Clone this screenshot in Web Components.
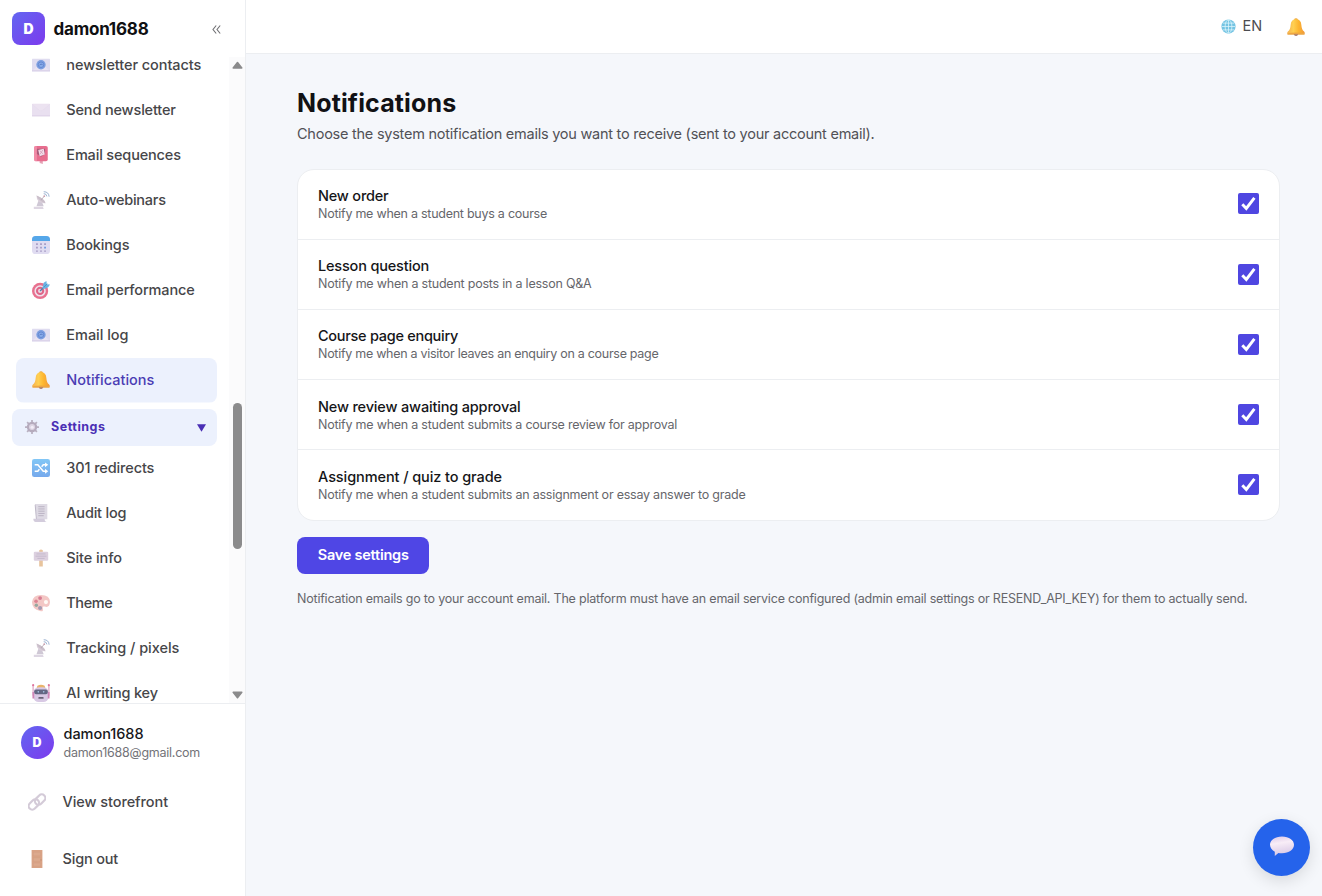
<!DOCTYPE html>
<html lang="en">
<head>
<meta charset="utf-8">
<title>Notifications</title>
<style>
html, body { margin: 0; height: 100%; overflow: hidden; font-family: Inter, "Liberation Sans", sans-serif; }
</style>
</head>
<body>
<app-shell></app-shell>
<script>
const define = (name, render, after) => customElements.define(name, class extends HTMLElement {
  connectedCallback() {
    if (this.shadowRoot) return;
    this.attachShadow({ mode: 'open' }).innerHTML = render(this);
    if (after) after(this);
  }
});

/* Single line of text, tracked to occupy the width given in "w". */
define('fit-text', () => `<style>:host{display:inline-block;white-space:nowrap;flex:none}</style><slot></slot>`, el => {
  const w = parseFloat(el.getAttribute('w'));
  const n = el.textContent.length;
  if (w && n) el.style.letterSpacing = ((w - el.getBoundingClientRect().width) / n).toFixed(4) + 'px';
});

const ICONS = {
  mailat: `<rect x="0" y="3" width="20" height="14" rx=".6" fill="#dfdcf0"/><path d="M0 17l7-7h6l7 7z" fill="#e9e3f2"/><path d="M0 16.500h20" stroke="#d3cbe4"/><circle cx="10" cy="9.700" r="5.200" fill="#7d9fe0"/><circle cx="10" cy="9.700" r="3.100" fill="#86abea" stroke="#5f82cd" stroke-width=".9"/><path d="M8.300 10.100q1.700-2 3.400-.5" stroke="#5877c2" fill="none"/>`,
  mail: `<rect x="0" y="3" width="20" height="14" rx=".6" fill="#e9e0f0"/><path d="M0 3.500l8.500 7q1.500 1 3 0L20 3.500" fill="#ece3f1" stroke="#e4d9eb" stroke-width=".5"/><path d="M0 16.500h20" stroke="#ddd0e6"/>`,
  postbox: `<path d="M8.500 16h3.500v4l-3.500-1z" fill="#e5a2b5"/><rect x="2.500" y="0" width="15" height="17" rx="2" fill="#e76d8e"/><rect x="2.500" y="0" width="3" height="17" rx="1.500" fill="#f08ba6"/><path d="M5.500 3h9v6l-4.500 3-4.500-3z" fill="#a85b79"/><path d="M7 4.500l6-1.500 1.200 6.500-5.700 1.800z" fill="#f2dce9"/><path d="M8.500 5l4 4M12 4.500L9 9" stroke="#cf90ab" stroke-width=".7"/>`,
  dish: `<path d="M7 11l-2 6h8l-2-5z" fill="#cfc8d5"/><path d="M2 17.500h10l1 2.500H2z" fill="#ddd6e2"/><path d="M5 5q0 9 10 8.500Q14 9 5 5z" fill="#d9ced9"/><path d="M5 5q2 6 10 8.500-1-5-10-8.500" fill="#c9bec9"/><path d="M10 10l3.500-4" stroke="#b8a8b6"/><circle cx="13.600" cy="5.800" r="1" fill="#c89fae"/><path d="M13 3q3-.3 3.500 3M13 .8q5.600 0 6 5.500" fill="none" stroke="#91aacd" stroke-width="1"/>`,
  calendar: `<rect x="0" y="0" width="20" height="20" rx="4" fill="#e0dcf1"/><path d="M0 5.500V4q0-4 4-4h12q4 0 4 4v1.500z" fill="#55a7e9"/><g fill="#a79cc5"><path d="M4.500 8h2v2h-2zM9 8h2v2H9zM13.500 8h2v2h-2zM4.500 12h2v2h-2zM9 12h2v2H9zM4.500 16h2v1.500h-2zM9 16h2v1.500H9zM13.500 16h2v1.500h-2z"/></g><path d="M13.500 12h2v2h-2z" fill="#6b9ae0"/>`,
  target: `<circle cx="9" cy="11" r="9" fill="#e8718f"/><circle cx="9" cy="11" r="6.300" fill="#efe2ed"/><circle cx="9" cy="11" r="4.600" fill="#df6587"/><circle cx="9" cy="11" r="2.300" fill="#ecd6e4"/><path d="M9 11l6-6" stroke="#577fa9" stroke-width="1.500"/><path d="M12 6l1-4 3-2 .5 3.500L20 4l-2 3-4 1.500-2 .5z" fill="#69b3e3"/><path d="M13 7l4-4" stroke="#4787b9" stroke-width=".8"/>`,
  bell: `<defs><linearGradient id="b"><stop stop-color="#f5b151"/><stop offset=".35" stop-color="#ffd052"/><stop offset=".65" stop-color="#fdb52f"/><stop offset="1" stop-color="#ef973e"/></linearGradient></defs><ellipse cx="10" cy="1.800" rx="1.900" ry="1.600" fill="#eea942"/><path d="M10 1.500q5.600 0 6 6.500.2 5 3 7 1 1 .7 2.500H.3Q0 16 1 15q2.800-2 3-7 .4-6.500 6-6.500z" fill="url(#b)"/><path d="M.5 17q9.500-2 19 0v1.500h-19z" fill="#eda643"/><path d="M7.500 18h5q-.5 2-2.500 2t-2.500-2z" fill="#a67864"/>`,
  gear: `<g stroke="#b9b1c1" stroke-width="2.500"><path d="M10 0v20M0 10h20M3 3l14 14M17 3L3 17"/></g><circle cx="10" cy="10" r="7.400" fill="#b5abbd"/><circle cx="10" cy="10" r="4.300" fill="#ddd5e3"/><circle cx="10.300" cy="10.300" r="2.200" fill="#f2edf7"/>`,
  shuffle: `<defs><linearGradient id="s" x2="0" y2="1"><stop stop-color="#82c7f6"/><stop offset="1" stop-color="#76a9ec"/></linearGradient></defs><rect width="20" height="20" rx="2.500" fill="url(#s)"/><path d="M3 6.500h3.500l6 7H16M3 13.500h3.500l1.700-2M10.700 8.500l1.800-2H16" fill="none" stroke="#fff" stroke-width="1.700"/><path d="M14.500 3.800L18 6.500l-3.500 2.800zM14.500 10.700L18 13.500l-3.500 2.800z" fill="#fff"/>`,
  scroll: `<path d="M4 0h13v17H5z" fill="#dedae4"/><path d="M4 0l1.500 18h-1L3 1z" fill="#bbb5c5"/><path d="M1.500 16.500H14q0 3.500 2.500 3.500H4q-2.500 0-2.500-3.500z" fill="#d3ccdc"/><path d="M7 3h7M7 5.500h7M7 8h7M7 10.500h7M7 13h6" stroke="#b3abbc" stroke-width=".9"/>`,
  sign: `<path d="M8 1.500Q10-.5 12 1.500V19.500H8z" fill="#e8c49d"/><rect x="2" y="3" width="16" height="10" rx="1.300" fill="#dcd0df"/><path d="M5 5.500h10M4 8h12M6 10.500h8" stroke="#b9aec3" stroke-width=".7"/>`,
  palette: `<path d="M10 1Q20 1 20 9q-.5 7-6 5-3-1-2 2 1 4-3 3Q0 17 0 9 1 1 10 1z" fill="#f3c7c5"/><circle cx="15.500" cy="9" r="2.300" fill="#fffaf5"/><circle cx="9" cy="4.500" r="2.100" fill="#d87d92"/><circle cx="4.500" cy="8" r="2" fill="#dc8392"/><circle cx="4.800" cy="12.500" r="1.900" fill="#97a89f"/><circle cx="9" cy="15.500" r="2.300" fill="#a59bb2"/>`,
  robot: `<path d="M1.200 1v12M18.800 1v12" stroke="#d283ad"/><circle cx="1.300" cy="1.300" r="1.200" fill="#df749c"/><circle cx="18.700" cy="1.300" r="1.200" fill="#df749c"/><path d="M6 2q4-2.500 8 0l1 3H5z" fill="#e9b46b"/><rect x="1.500" y="3.500" width="17" height="16.500" rx="6" fill="#d8c9e4"/><path d="M.5 9h2v7h-2zM17.500 9h2v7h-2z" fill="#ce86b7"/><rect x="2.500" y="6" width="15" height="5.500" rx="2" fill="#636783"/><circle cx="7" cy="8.700" r=".9" fill="#a6c7e5"/><circle cx="13" cy="8.700" r=".9" fill="#a6c7e5"/><rect x="7" y="14.500" width="6" height="2" rx="1" fill="#6a6377"/>`,
  link: `<g fill="none" stroke="#d4cbd8" stroke-width="2.400"><rect x="0" y="8.700" width="13" height="8" rx="4" transform="rotate(-45 6.500 12.700)"/><rect x="7" y="3.300" width="13" height="8" rx="4" transform="rotate(-45 13.500 7.300)"/></g>`,
  door: `<rect x="4" y="0" width="12" height="20" fill="#d9a386"/><path d="M6 2.500h8v4H6zM6 8.500h8v4H6zM6 14.500h8v3.500H6z" fill="#dca98d" stroke="#d39e80" stroke-width=".4"/><circle cx="14.500" cy="11" r=".7" fill="#c08d6c"/>`,
  globe: `<circle cx="10" cy="10" r="9.500" fill="#74c4e3"/><g fill="none" stroke="#dff5fb" stroke-width="1"><ellipse cx="10" cy="10" rx="4.500" ry="9"/><path d="M10 1v18M1 10h18M2.500 5.500h15M2.500 14.500h15"/></g>`,
  bubble: `<defs><linearGradient id="u" x2=".2" y2="1"><stop stop-color="#dcc8e8"/><stop offset=".4" stop-color="#f8edf7"/><stop offset="1" stop-color="#d9c9e6"/></linearGradient></defs><path d="M10 1.200c6 0 10 3 10 7s-4 7-10 7q-2 0-3-.3L4 17.500v-3.600Q0 11.800 0 8.200c0-4 4-7 10-7z" fill="url(#u)"/>`
};
define('emoji-icon', el => `<style>:host{display:block;flex:none;width:var(--s,18px);height:var(--s,18px)}svg{display:block;width:100%;height:100%}</style><svg viewBox="0 0 20 20">${ICONS[el.getAttribute('name')]}</svg>`);

define('nav-item', el => `<style>
:host{display:flex;align-items:center;box-sizing:border-box;height:45px;flex:none;margin-left:16px;width:201px;padding-left:16px;gap:16.300px;font-size:14.500px;font-weight:450;color:#464649;border-radius:8px;line-height:20px}
:host([active]){color:#4a3cb4;background:linear-gradient(#ecf1fd,#ecf1fd) 0 0/100% 44.500px no-repeat}
emoji-icon{margin-top:-1px}
fit-text{margin-top:-1.500px}
</style><emoji-icon name="${el.getAttribute('icon')}"></emoji-icon><fit-text w="${el.getAttribute('w')}">${el.getAttribute('label')}</fit-text>`);

define('nav-group', el => `<style>
:host{display:flex;align-items:center;box-sizing:border-box;flex:none;height:37px;width:205px;margin:6px 0 0 12px;padding:0 11px 1px 13px;background:#ecf1fd;border-radius:8px;color:#4a2fb5;font-weight:700;font-size:12.500px;line-height:18px}
emoji-icon{--s:14px;margin-right:12px}
svg{margin-left:auto;width:9px;height:8px;margin-top:1px}
</style><emoji-icon name="gear"></emoji-icon><fit-text w="54.500">${el.getAttribute('label')}</fit-text><svg viewBox="0 0 9 8"><path d="M0 .3h9L4.500 7.700z" fill="#4a2fb5"/></svg>`);

define('scroll-bar', () => `<style>
:host{display:flex;flex-direction:column;align-items:center;box-sizing:border-box;width:16px;flex:none;background:#fbfbfc;padding:4px 0 4px 0}
svg{display:block;width:11px;height:8px;flex:none}
.track{flex:1;display:flex;justify-content:center;width:100%}
.thumb{width:9px;height:146px;border-radius:5px;background:#8b8b8c;margin-top:333.500px}
</style><svg viewBox="0 0 11 8"><path d="M5.500 1.500L9.800 7H1.200z" fill="#8b8b8c" stroke="#8b8b8c" stroke-width="1.500" stroke-linejoin="round"/></svg><div class="track"><div class="thumb"></div></div><svg viewBox="0 0 11 8"><path d="M1.200 1.300h8.600L5.500 6.800z" fill="#8b8b8c" stroke="#8b8b8c" stroke-width="1.500" stroke-linejoin="round"/></svg>`);

define('user-avatar', () => `<style>
:host{display:flex;align-items:center;justify-content:center;flex:none;width:33px;height:33px;border-radius:var(--r,50%);background:linear-gradient(135deg,#6366f1,#7c3aed);color:#fff;font-weight:900;font-size:var(--fs,12.500px)}
</style>D`);

const item = (icon, label, w, extra = '') => `<nav-item icon="${icon}" label="${label}" w="${w}" ${extra}></nav-item>`;
define('side-bar', () => `<style>
:host{display:flex;flex-direction:column;box-sizing:border-box;width:246px;height:100%;flex:none;background:#fff;border-right:1px solid #eceef1}
.brand{display:flex;align-items:center;height:57px;flex:none;padding-left:12px}
.brand user-avatar{--r:8px;--fs:14px}
.brand fit-text{font-size:17px;font-weight:700;color:#101012;margin:0 0 0 8.500px;line-height:22px}
.brand svg{width:9px;height:9px;margin-left:63px;margin-top:2px}
.scroll{display:flex;justify-content:space-between;height:646px;flex:none;overflow:hidden}
nav{width:228px;height:646px;overflow:hidden;display:flex;flex-direction:column}
nav nav-item:first-child{margin-top:-14px}
.foot{border-top:1px solid #eceef1;flex:1;display:flex;flex-direction:column}
.user{display:flex;padding:22px 0 0 20.500px;gap:10px}
.who{display:flex;flex-direction:column;align-items:flex-start;margin-top:-2px}
.n{font-size:14.500px;font-weight:500;line-height:20px;color:#17171a}
.e{font-size:12.500px;line-height:18px;color:#737378}
.foot nav-item{margin-left:12px;gap:16.500px}
.foot nav-item:nth-child(2){margin-top:18px}
.foot nav-item:nth-child(3){margin-top:12px}
</style>
<div class="brand"><user-avatar></user-avatar><fit-text w="95">damon1688</fit-text><svg viewBox="0 0 9 9"><path d="M4.200.5L1 4.500l3.200 4M8.200.5L5 4.500l3.200 4" fill="none" stroke="#707074" stroke-width="1.100"/></svg></div>
<div class="scroll"><nav>
${item('mailat', 'newsletter contacts', 135)}${item('mail', 'Send newsletter', 109.5)}${item('postbox', 'Email sequences', 114.5)}${item('dish', 'Auto-webinars', 99.5)}${item('calendar', 'Bookings', 63)}${item('target', 'Email performance', 128.3)}${item('mailat', 'Email log', 62.3)}${item('bell', 'Notifications', 88, 'active')}
<nav-group label="Settings"></nav-group>
${item('shuffle', '301 redirects', 88)}${item('scroll', 'Audit log', 60)}${item('sign', 'Site info', 55.5)}${item('palette', 'Theme', 46)}${item('dish', 'Tracking / pixels', 113)}${item('robot', 'AI writing key', 91.5)}
</nav><scroll-bar></scroll-bar></div>
<div class="foot"><div class="user"><user-avatar></user-avatar><div class="who"><fit-text class="n" w="80">damon1688</fit-text><fit-text class="e" w="136.500">damon1688@gmail.com</fit-text></div></div>
${item('link', 'View storefront', 105.5)}${item('door', 'Sign out', 55.5)}</div>`);

define('top-bar', () => `<style>
:host{display:flex;align-items:center;justify-content:flex-end;box-sizing:border-box;height:54px;flex:none;background:#fff;border-bottom:1px solid #eceef1;padding-right:17px}
.globe{--s:15px;margin-right:7px;margin-top:-1px}.bell{--s:18px;margin-left:25px}
fit-text{font-size:14.500px;color:#4c4c50;line-height:20px;margin-top:-1px}
</style><emoji-icon class="globe" name="globe"></emoji-icon><fit-text w="19.500">EN</fit-text><emoji-icon class="bell" name="bell"></emoji-icon>`);

define('check-box', () => `<style>:host{display:block;width:21px;height:21px;flex:none;margin-top:-.5px}svg{display:block}</style><svg width="21" height="21" viewBox="0 0 21 21"><rect width="21" height="21" rx="2" fill="#4f46e1"/><path d="M4.300 11.200l4 4.200L16.400 4.800" fill="none" stroke="#fff" stroke-width="2.900"/></svg>`);

define('setting-row', el => `<style>
:host{display:flex;align-items:center;justify-content:space-between;box-sizing:border-box;flex:1;padding:0 20px;border-top:1px solid #eceef1}
:host(:first-child){border-top:0}
.t{display:flex;flex-direction:column;align-items:flex-start;margin-top:.4px}
.a{font-size:14.500px;font-weight:500;line-height:19px;color:#151518}
.b{font-size:12.500px;line-height:18px;color:#66666b}
</style><div class="t"><fit-text class="a" w="${el.getAttribute('w1')}">${el.getAttribute('label')}</fit-text><fit-text class="b" w="${el.getAttribute('w2')}">${el.getAttribute('note')}</fit-text></div><check-box></check-box>`);

define('settings-card', () => `<style>:host{display:flex;flex-direction:column;box-sizing:border-box;width:983px;height:352px;background:#fff;border:1px solid #eceef1;border-radius:17px}</style><slot></slot>`);

define('primary-button', () => `<style>:host{display:flex;align-items:center;justify-content:center;box-sizing:border-box;width:132.400px;height:37px;padding-bottom:1.500px;border-radius:8px;background:#4f46e5;color:#fff;font-weight:600;font-size:14.500px}</style><slot></slot>`);

define('chat-launcher', () => `<style>:host{position:absolute;right:12px;bottom:20.500px;width:57px;height:57px;border-radius:50%;background:#2563eb;display:flex;align-items:center;justify-content:center;box-shadow:0 5px 16px rgba(0,0,0,.12)}emoji-icon{--s:24px}</style><emoji-icon name="bubble"></emoji-icon>`);

define('notifications-page', () => `<style>
:host{display:flex;flex-direction:column;align-items:flex-start;padding:32px 0 0 51px}
h1{margin:0;font-size:25px;line-height:34px;font-weight:700;color:#111114}
.lead{font-size:14.500px;line-height:20px;color:#515156;margin-top:4px}
settings-card{margin-top:24.600px}
primary-button{margin-top:16.400px}
.foot{font-size:12.500px;line-height:18px;color:#66666b;margin-top:16px}
</style>
<h1><fit-text w="159.300">Notifications</fit-text></h1>
<fit-text class="lead" w="577.500">Choose the system notification emails you want to receive (sent to your account email).</fit-text>
<settings-card>
<setting-row label="New order" w1="70.500" note="Notify me when a student buys a course" w2="229"></setting-row>
<setting-row label="Lesson question" w1="111" note="Notify me when a student posts in a lesson Q&amp;A" w2="273.500"></setting-row>
<setting-row label="Course page enquiry" w1="140" note="Notify me when a visitor leaves an enquiry on a course page" w2="340.500"></setting-row>
<setting-row label="New review awaiting approval" w1="202.500" note="Notify me when a student submits a course review for approval" w2="359"></setting-row>
<setting-row label="Assignment / quiz to grade" w1="184" note="Notify me when a student submits an assignment or essay answer to grade" w2="427.500"></setting-row>
</settings-card>
<primary-button><fit-text w="91">Save settings</fit-text></primary-button>
<fit-text class="foot" w="950.500">Notification emails go to your account email. The platform must have an email service configured (admin email settings or RESEND_API_KEY) for them to actually send.</fit-text>`);

define('app-shell', () => `<style>
:host{display:flex;position:relative;width:100%;height:896px;overflow:hidden;background:#f5f7fb}
main{flex:1;min-width:0;display:flex;flex-direction:column}
</style><side-bar></side-bar><main><top-bar></top-bar><notifications-page></notifications-page></main><chat-launcher></chat-launcher>`);
</script>
</body>
</html>
